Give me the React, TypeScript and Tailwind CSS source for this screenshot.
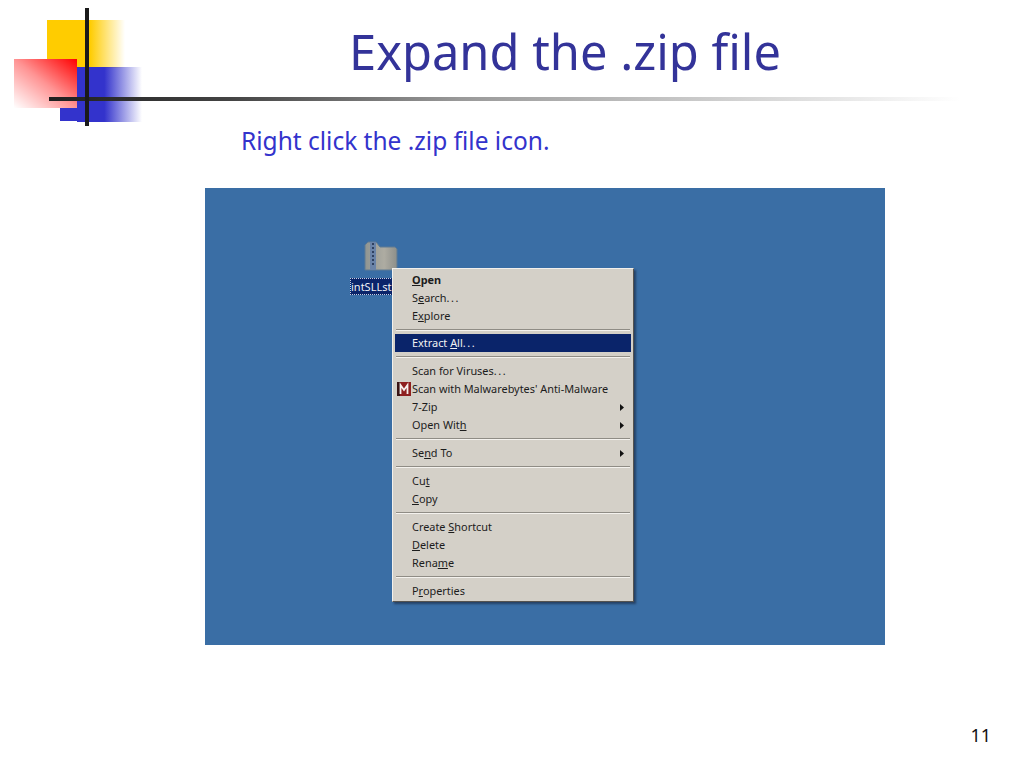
import React from "react";

const F = "[font-family:'Noto_Sans','DejaVu_Sans',sans-serif]";

function Logo() {
  return (
    <svg width="1024" height="130" viewBox="0 0 1024 130" className="absolute left-0 top-0" aria-hidden>
      <defs>
        <linearGradient id="yel" x1="0" x2="1" y1="0" y2="0">
          <stop offset="0" stopColor="#ffcc00" />
          <stop offset="0.55" stopColor="#ffcc00" />
          <stop offset="1" stopColor="#ffcc00" stopOpacity="0" />
        </linearGradient>
        <linearGradient id="blu" x1="0" x2="1" y1="0" y2="0">
          <stop offset="0" stopColor="#3333cc" />
          <stop offset="0.42" stopColor="#3333cc" />
          <stop offset="1" stopColor="#3333cc" stopOpacity="0" />
        </linearGradient>
        <linearGradient id="red" x1="1" x2="0" y1="0" y2="1">
          <stop offset="0" stopColor="#ff0000" />
          <stop offset="0.5" stopColor="#ff0000" stopOpacity="0.42" />
          <stop offset="1" stopColor="#ff0000" stopOpacity="0" />
        </linearGradient>
        <linearGradient id="rule" x1="0" x2="1" y1="0" y2="0">
          <stop offset="0" stopColor="#1f1f1f" />
          <stop offset="0.2" stopColor="#444444" />
          <stop offset="0.45" stopColor="#999999" />
          <stop offset="1" stopColor="#ffffff" />
        </linearGradient>
      </defs>
      <rect x="47" y="20" width="78" height="48" fill="url(#yel)" />
      <rect x="77" y="67" width="65" height="55" fill="url(#blu)" />
      <rect x="60" y="100" width="30" height="21" fill="#3333cc" />
      <rect x="14" y="59" width="63" height="49" fill="#ffffff" />
      <rect x="14" y="59" width="63" height="49" fill="url(#red)" />
      <rect x="49" y="97" width="911" height="4" fill="url(#rule)" />
      <rect x="85" y="8" width="4" height="118" fill="#1a1a1a" />
    </svg>
  );
}

type Item = { l: React.ReactNode; b?: boolean; arrow?: boolean; active?: boolean; icon?: boolean };

const Sep = ({ short }: { short?: boolean }) => (
  <div className={`${short ? "h-[9px]" : "h-[10px]"} flex flex-col justify-center px-[1px]`}>
    <div className="h-[1px] bg-[#8f8c85]" />
    <div className="h-[1px] bg-[#f4f2ee]" />
  </div>
);

const Dots = () => <span className="tracking-[1.6px]">...</span>;

function Row({ l, b, arrow, active, icon }: Item) {
  return (
    <div
      className={`h-[18px] flex items-center pl-[17px] pr-[7px] relative text-[10.9px] leading-none ${
        active ? "bg-[#0a246a] text-[#f2f2f2]" : "text-[#1c1c1c]"
      } ${b ? "font-bold" : ""}`}
    >
      {icon && (
        <svg width="14" height="14" viewBox="0 0 14 14" className="absolute left-[2px] top-[2px]" aria-hidden>
          <rect width="14" height="14" fill="#8e1f1f" />
          <rect width="3" height="14" fill="#3a1414" />
          <path d="M3.5 12V3l3.5 5 3.5-5v9" fill="none" stroke="#f6f0ee" strokeWidth="1.8" />
        </svg>
      )}
      <span className="flex-1">{l}</span>
      {arrow && (
        <svg width="4" height="7" viewBox="0 0 4 7" aria-hidden>
          <path d="M0 0l4 3.5L0 7z" fill="#111111" />
        </svg>
      )}
    </div>
  );
}

export default function App() {
  return (
    <div className={`relative w-[1024px] h-[768px] bg-white overflow-hidden ${F}`}>
      <Logo />
      <h1 className="relative pt-[18px] h-[129px] pl-[349px] text-[48.8px] leading-[66px] font-normal text-[#333399]">
        Expand the .zip file
      </h1>
      <p className="pl-[241px] text-[24.5px] leading-[24px] text-[#3333cc]">Right click the .zip file icon.</p>
      <div className="relative ml-[205px] mt-[35px] w-[680px] h-[457px] bg-[#3a6ea5]">
        {/* desktop icon */}
        <svg width="34" height="30" viewBox="0 0 34 30" className="absolute left-[159px] top-[53px]" aria-hidden>
          <defs>
            <linearGradient id="fold" x1="0" x2="1" y1="0" y2="0">
              <stop offset="0" stopColor="#8f9592" />
              <stop offset="0.6" stopColor="#aeaca2" />
              <stop offset="1" stopColor="#8d8f8a" />
            </linearGradient>
          </defs>
          <path d="M1 29V4l3-3h8l4 5h15l2 2v21z" fill="url(#fold)" stroke="#5f7a93" />
          <rect x="6" y="1" width="6" height="28" fill="#6a83a8" />
          <path d="M8 3h2M8 7h2M8 11h2M8 15h2M8 19h2M8 23h2" stroke="#1d2d4a" strokeWidth="1.4" />
        </svg>
        <div className="absolute left-[145px] top-[90px] h-[17px] w-[45px] bg-[#0a246a] outline-1 outline-dotted outline-[#c9cfe0] -outline-offset-1 text-[11px] leading-[17px] text-[#eef0f6] pl-[1px] overflow-hidden whitespace-nowrap">
          intSLLst
        </div>
        {/* context menu */}
        <div className="absolute left-[187px] top-[80px] w-[242px] h-[334px] bg-[#d4d0c8] border border-t-[#f2f0ec] border-l-[#f2f0ec] border-r-[#55534f] border-b-[#55534f] px-[2px] pt-[2px] shadow-[2px_2px_2px_rgba(20,30,50,0.55)]">
          <Row b l={<><u>O</u>pen</>} />
          <Row l={<>S<u>e</u>arch<Dots /></>} />
          <Row l={<>E<u>x</u>plore</>} />
          <Sep short />
          <Row active l={<>Extract <u>A</u>ll<Dots /></>} />
          <Sep />
          <Row l={<>Scan for Viruses<Dots /></>} />
          <Row icon l="Scan with Malwarebytes' Anti-Malware" />
          <Row arrow l="7-Zip" />
          <Row arrow l={<>Open Wit<u>h</u></>} />
          <Sep />
          <Row arrow l={<>Se<u>n</u>d To</>} />
          <Sep />
          <Row l={<>Cu<u>t</u></>} />
          <Row l={<><u>C</u>opy</>} />
          <Sep />
          <Row l={<>Create <u>S</u>hortcut</>} />
          <Row l={<><u>D</u>elete</>} />
          <Row l={<>Rena<u>m</u>e</>} />
          <Sep />
          <Row l={<>P<u>r</u>operties</>} />
        </div>
      </div>
      <p className="absolute right-[33px] top-[723px] text-[18px] leading-[24px] text-[#111111]">11</p>
    </div>
  );
}
